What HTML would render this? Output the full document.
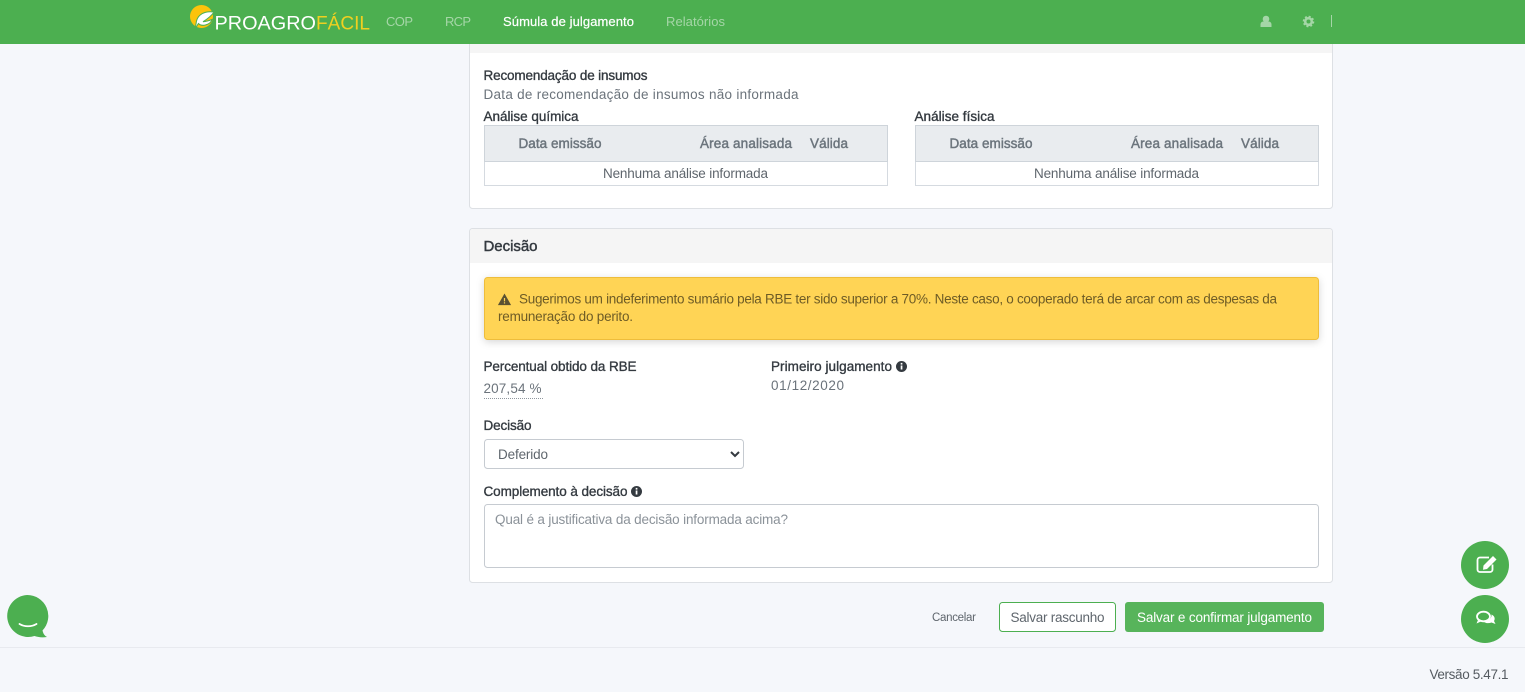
<!DOCTYPE html>
<html lang="pt-BR"><head><meta charset="utf-8"><title>Proagro Fácil</title>
<style>
html,body{margin:0;padding:0;width:1525px;height:692px;overflow:hidden;background:#f5f7fb}
svg{display:block}
text{font-family:"Liberation Sans",sans-serif;font-size:13.5px;fill:#6b737b}
.l{fill:#343a40;stroke:#343a40;stroke-width:.35}
.h{fill:#6c757d;stroke:#6c757d;stroke-width:.45}
.n{fill:#a5d6a7;font-size:13px}
.a{fill:#6e5c26}
</style></head><body>
<svg width="1525" height="692" viewBox="0 0 1525 692" xmlns="http://www.w3.org/2000/svg">
<defs><filter id="s" x="-5%" y="-30%" width="110%" height="170%"><feDropShadow dx="0" dy="2" stdDeviation="4" flood-color="#000" flood-opacity=".16"/></filter></defs>
<rect width="1525" height="692" fill="#f5f7fb"/>

<!-- Card 1 -->
<rect x="469.5" y="30" width="863" height="178.5" rx="3" fill="#fff" stroke="#dde0e4"/>
<rect x="470" y="44" width="862" height="9" fill="#f5f5f5"/>
<text x="483.5" y="80" class="l" textLength="164">Recomendação de insumos</text>
<text x="483.5" y="99" textLength="315">Data de recomendação de insumos não informada</text>
<text x="483.5" y="121" class="l" textLength="95">Análise química</text>
<text x="914.5" y="121" class="l" textLength="80">Análise física</text>

<g>
<rect x="484.5" y="125.5" width="403" height="60" fill="#fff" stroke="#d5dae0"/>
<rect x="484.5" y="125.5" width="403" height="36" fill="#e9ecef" stroke="#ced4da"/>
<text x="518.500" y="148" class="h" textLength="83">Data emissão</text>
<text x="700" y="148" class="h" textLength="92">Área analisada</text>
<text x="810" y="148" class="h" textLength="38">Válida</text>
<text x="603" y="178" style="fill:#5f666d" textLength="165">Nenhuma análise informada</text>
</g>
<g>
<rect x="915.5" y="125.5" width="403" height="60" fill="#fff" stroke="#d5dae0"/>
<rect x="915.5" y="125.5" width="403" height="36" fill="#e9ecef" stroke="#ced4da"/>
<text x="949.500" y="148" class="h" textLength="83">Data emissão</text>
<text x="1131" y="148" class="h" textLength="92">Área analisada</text>
<text x="1241" y="148" class="h" textLength="38">Válida</text>
<text x="1034" y="178" style="fill:#5f666d" textLength="165">Nenhuma análise informada</text>
</g>

<!-- Card 2 -->
<rect x="469.5" y="228.5" width="863" height="354" rx="3" fill="#fff" stroke="#dde0e4"/>
<path d="M470 263V232a3 3 0 0 1 3-3H1329a3 3 0 0 1 3 3V263Z" fill="#f5f5f5"/>
<text x="483.500" y="251" class="l" style="font-size:15px;stroke-width:.45" textLength="54">Decisão</text>

<rect x="484.5" y="277.5" width="834" height="62" rx="3" fill="#ffd454" stroke="#eebd3a" filter="url(#s)"/>
<path d="M504.5 293.500l6.600 11.600h-13.200zM503.900 298v3.400h1.200V298zm0 4.300v1.200h1.200v-1.200z" fill="#5b5232" fill-rule="evenodd"/>
<text x="519" y="303.500" class="a" textLength="758">Sugerimos um indeferimento sumário pela RBE ter sido superior a 70%. Neste caso, o cooperado terá de arcar com as despesas da</text>
<text x="498" y="321" class="a" textLength="135">remuneração do perito.</text>

<text x="483.500" y="371" class="l" textLength="153">Percentual obtido da RBE</text>
<text x="483.500" y="393" textLength="58">207,54 %</text>
<line x1="484" y1="398.500" x2="543" y2="398.500" stroke="#8f969d" stroke-dasharray="1 1"/>
<text x="771" y="371" class="l" textLength="121">Primeiro julgamento</text>
<g><circle cx="901.500" cy="366.500" r="5.500" fill="#343a40"/><rect x="900.700" y="365.500" width="1.700" height="4" fill="#fff"/><rect x="900.700" y="362.900" width="1.700" height="1.700" fill="#fff"/></g>
<text x="771" y="390" textLength="73">01/12/2020</text>

<text x="483.500" y="430" class="l" textLength="48">Decisão</text>
<rect x="484.5" y="439.500" width="259" height="29" rx="3" fill="#fff" stroke="#c6cbd1"/>
<text x="498" y="459" style="fill:#5f666d" textLength="50">Deferido</text>
<path d="M731 452l4 4 4-4" fill="none" stroke="#343a40" stroke-width="2"/>

<text x="483.500" y="496" class="l" textLength="144">Complemento à decisão</text>
<g><circle cx="636.500" cy="491.500" r="5.500" fill="#343a40"/><rect x="635.700" y="490.500" width="1.700" height="4" fill="#fff"/><rect x="635.700" y="487.900" width="1.700" height="1.700" fill="#fff"/></g>
<rect x="484.5" y="504.500" width="834" height="63" rx="3" fill="#fff" stroke="#c6cbd1"/>
<text x="495" y="524" style="fill:#8b9299" textLength="293">Qual é a justificativa da decisão informada acima?</text>

<!-- Buttons -->
<text x="932" y="621" style="font-size:11.500px;fill:#5f666d" textLength="44">Cancelar</text>
<rect x="999.500" y="602.500" width="116" height="29" rx="3" fill="#fff" stroke="#4caf50"/>
<text x="1010.500" y="622" style="fill:#5f666d" textLength="94">Salvar rascunho</text>
<rect x="1125" y="602" width="199" height="30" rx="3" fill="#57b45b"/>
<text x="1137" y="622" style="fill:#fff" textLength="175">Salvar e confirmar julgamento</text>

<!-- Footer -->
<rect x="0" y="647" width="1525" height="1" fill="#e8eaef"/>
<text x="1429.500" y="679" style="fill:#555b61" textLength="79">Versão 5.47.1</text>

<!-- Floating -->
<circle cx="1485" cy="565" r="24" fill="#4caf50"/>
<path d="M1489 557.500h-9a2.500 2.500 0 0 0-2.500 2.500v9.500a2.500 2.500 0 0 0 2.500 2.500h10a2.500 2.500 0 0 0 2.500-2.500v-5" fill="none" stroke="#fff" stroke-width="1.800"/>
<path d="M1483.500 565.500l9.500-9.500 3.500 3.500-9.500 9.500-4 .8z" fill="#fff"/>
<circle cx="1485" cy="619" r="24" fill="#4caf50"/>
<ellipse cx="1483.500" cy="616.500" rx="6.500" ry="4.800" fill="none" stroke="#fff" stroke-width="1.800"/>
<path d="M1478 620l-1.500 3.500 4.500-2z" fill="#fff"/>
<path d="M1491.500 614.500c3 1.500 4 4 2.500 6.500l1.500 3-4-1.500c-3 1.200-6 .8-8-1 4 0 8.500-2.500 8-7z" fill="#fff"/>
<path d="M27.500 595a21 21 0 1 0 7.500 41c3 1 7 1.800 12.500 1-2.800-1.500-3.800-3.500-4.500-6.500A21 21 0 0 0 27.500 595z" fill="#4caf50" transform="translate(-.5 0)"/>
<path d="M19.500 624c5 3 12 3 17 0" fill="none" stroke="#fff" stroke-width="1.800" stroke-linecap="round"/>

<!-- Navbar -->
<rect width="1525" height="44" fill="#4caf50"/>
<circle cx="201.500" cy="16.500" r="11.500" fill="#fcc30b"/>
<path d="M214 12c-10-1.500-16 3-17.500 9-.5 3-1 6-1.500 8.500 1.500-2.500 2.500-5 3.500-6 3 3.500 12 1.500 13.500-4-3 1.200-6 2-9 2.200 3.500-2.200 8-5 11-9.700z" fill="#fff" stroke="#4caf50" stroke-width="1"/>
<text x="214.500" y="29.500" style="font-size:19px;fill:#fff" textLength="101.500" lengthAdjust="spacingAndGlyphs">PROAGRO</text>
<text x="316" y="29.500" style="font-size:19px;fill:#f0d020" textLength="54" lengthAdjust="spacingAndGlyphs">FÁCIL</text>
<text x="386" y="26" class="n" textLength="27">COP</text>
<text x="445" y="26" class="n" textLength="26">RCP</text>
<text x="503" y="26" style="font-size:13px;fill:#fff;stroke:#fff;stroke-width:.2" textLength="131">Súmula de julgamento</text>
<text x="666" y="26" class="n" textLength="59">Relatórios</text>
<circle cx="1266" cy="19" r="3.300" fill="#a5d6a7"/>
<path d="M1260.500 27v-2.500c0-2 1.500-3 3-3h5c1.500 0 3 1 3 3V27z" fill="#a5d6a7"/>
<circle cx="1308.500" cy="21.500" r="3.300" fill="none" stroke="#a5d6a7" stroke-width="2.600"/>
<circle cx="1308.500" cy="21.500" r="5" fill="none" stroke="#a5d6a7" stroke-width="1.600" stroke-dasharray="2 1.930"/>
<rect x="1331" y="15" width="1" height="12" fill="#a5d6a7"/>
</svg>
</body></html>
